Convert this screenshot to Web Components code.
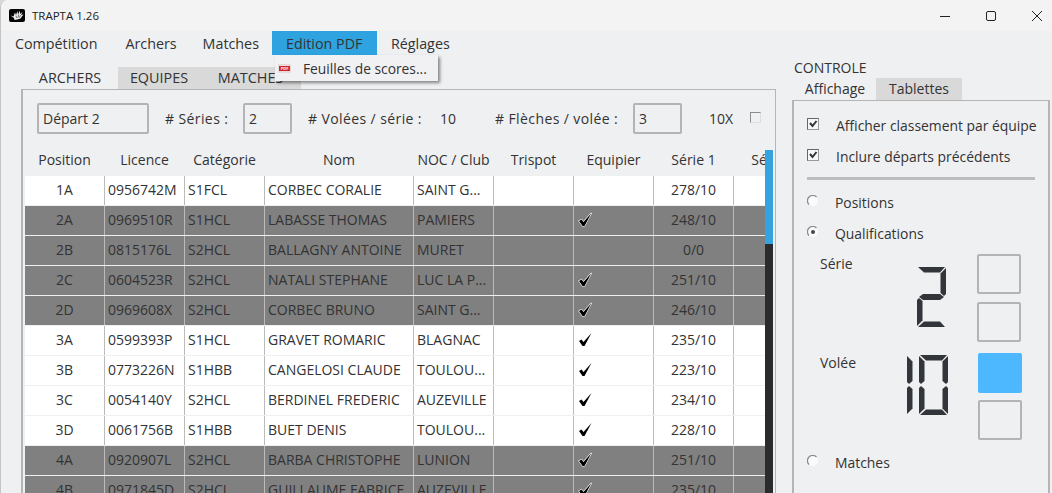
<!DOCTYPE html>
<html lang="fr">
<head>
<meta charset="utf-8">
<title>TRAPTA 1.26</title>
<style>
html, body { margin: 0; height: 100%; overflow: hidden; background: #d9d9d9; }
body { font-family: "Open Sans", "Noto Sans", "Liberation Sans", sans-serif; font-size: 14px; color: #333; }
</style>
</head>
<body>
<trapta-window>
  <title-bar slot="title">TRAPTA 1.26</title-bar>
  <menu-bar slot="menu"></menu-bar>
  <left-pane slot="left"></left-pane>
  <control-pane slot="right"></control-pane>
</trapta-window>

<script>
'use strict'

class TrapaWindow extends HTMLElement {
    constructor() {
        super()
        this.attachShadow({mode: 'open'}).innerHTML = `
<style>
    :host { display: flex; flex-direction: column; height: 493px; background: #eff0f2;
            border-top-left-radius: 8px; border-left: 1px solid #c4c4c4; box-sizing: border-box; overflow: hidden; position: relative; }
    .main { display: flex; flex: 1; min-height: 0; padding: 12px 2px 0 20px; gap: 16px; }
</style>
<slot name="title"></slot>
<slot name="menu"></slot>
<div class="main"><slot name="left"></slot><slot name="right"></slot></div>`
    }
}
customElements.define('trapta-window', TrapaWindow)

class TitleBar extends HTMLElement {
    constructor() {
        super()
        this.attachShadow({mode: 'open'}).innerHTML = `
<style>
    :host { display: flex; align-items: center; height: 31px; background: #f3f3f3; padding-left: 8px; font-size: 11.500px; color: #222; }
    .logo { width: 16px; height: 13px; margin-right: 7px; margin-top: -1px; }
    .label { flex: 1; margin-top: -1px; }
    .btns { display: flex; align-items: center; gap: 36px; margin-right: 10px; }
    .btns svg { width: 10px; height: 10px; display: block; }
</style>
<svg class="logo" viewBox="0 0 16 13">
  <rect width="16" height="13" rx="2" fill="#050505"/>
  <path d="M1.500 6.500 4.500 7.500 6 3.500 7 6 8.500 2 9 5.500 11 1.500 11 5 13.500 3 12 6 14.500 5.500 12.500 8 11.500 9.500 8 10.500 5.500 11 5 9Z" fill="#f0f0f0"/>
  <path d="M7 6.500 7.500 9M9.500 5.500 9 9M11.500 6 10.500 8.500" stroke="#222" stroke-width=".6"/>
</svg>
<span class="label"><slot></slot></span>
<div class="btns">
  <svg viewBox="0 0 10 10"><path d="M0 5.500H10" stroke="#222" stroke-width="1"/></svg>
  <svg viewBox="0 0 10 10"><rect x=".5" y=".5" width="9" height="9" rx="1.500" fill="none" stroke="#222" stroke-width="1"/></svg>
  <svg viewBox="0 0 10 10"><path d="M0 0 10 10M10 0 0 10" stroke="#222" stroke-width="1"/></svg>
</div>`
    }
}
customElements.define('title-bar', TitleBar)

class MenuBar extends HTMLElement {
    constructor() {
        super()
        this.attachShadow({mode: 'open'}).innerHTML = `
<style>
    :host { display: flex; height: 24px; line-height: 25px; font-size: 14.300px; color: #333; position: relative; z-index: 5; }
    span { padding: 0 14px; }
    .active { background: #2fa3e0; width: 105px; box-sizing: border-box; margin-left: -1px; }
    .popup { position: absolute; left: 274px; top: 24px; width: 163px; height: 26px; background: #f1f1f3;
             box-shadow: 2px 2px 3px rgba(0,0,0,.45); display: flex; align-items: center; gap: 12px; padding: 2px 0 0 3px; box-sizing: border-box; }
    .popup svg { width: 13px; height: 9px; margin-top: -1px; flex: none; }
    .popup b { font-weight: 400; font-size: 13.800px; line-height: 20px; margin-top: -1px; }
</style>
<span>Compétition</span><span style="padding-right:12px">Archers</span><span>Matches</span><span class="active">Edition PDF</span><span>Réglages</span>
<div class="popup">
  <svg viewBox="0 0 13 9"><rect width="13" height="9" rx="1" fill="#e6dada"/><rect x="1" y="2" width="11" height="5" fill="#d8232a"/><text x="6.500" y="6.200" font-size="4" font-weight="700" fill="#fff" text-anchor="middle">PDF</text></svg>
  <b>Feuilles de scores...</b>
</div>`
    }
}
customElements.define('menu-bar', MenuBar)

class TabStrip extends HTMLElement {
    constructor() {
        super()
        const root = this.attachShadow({mode: 'open'})
        const tabs = (this.getAttribute('tabs') || '').split(',')
        const widths = (this.getAttribute('widths') || '').split(',')
        root.innerHTML = `
<style>
    :host { display: flex; height: 22px; line-height: 22px; font-size: var(--tab-size, 14px); }
    span { box-sizing: border-box; text-align: center; flex: none; }
    .first { padding-left: var(--tab-first-pad, 0); }
    .off { background: #d9d9d9; padding-right: var(--tab-off-pad, 0); }
</style>
${tabs.map((t, i) => `<span class="${i ? 'off' : 'first'}" style="width:${widths[i]}px">${t}</span>`).join('')}`
    }
}
customElements.define('tab-strip', TabStrip)

class FieldBox extends HTMLElement {
    constructor() {
        super()
        this.attachShadow({mode: 'open'}).innerHTML = `
<style>
    :host { display: flex; align-items: center; box-sizing: border-box; height: 31px; border: 2px solid #b4b4b4; border-radius: 2px; padding-left: 4px; font-size: 14px; }
</style><slot></slot>`
    }
}
customElements.define('field-box', FieldBox)

class ScoreForm extends HTMLElement {
    constructor() {
        super()
        this.attachShadow({mode: 'open'}).innerHTML = `
<style>
    :host { display: flex; align-items: center; height: 31px; font-size: 14px; padding-left: 14px; }
    field-box { flex: none; }
    span { flex: none; }
    .lbl { letter-spacing: .4px; }
    .tick { width: 11px; height: 11px; border: 1px solid #8c8c8c; border-right-color: #ddd; border-bottom-color: #ddd; box-sizing: border-box; margin-left: 17px; margin-top: -2px; }
</style>
<field-box style="width:112px">Départ 2</field-box>
<span class="lbl" style="margin-left:16px;width:78px"># Séries :</span>
<field-box style="width:49px">2</field-box>
<span class="lbl" style="margin-left:16px;width:132px"># Volées / série :</span>
<span style="width:55px">10</span>
<span class="lbl" style="width:138px"># Flèches / volée :</span>
<field-box style="width:49px">3</field-box>
<span style="margin-left:27px">10X</span>
<div class="tick"></div>`
    }
}
customElements.define('score-form', ScoreForm)

const CHECK = `<svg width="15" height="15" viewBox="0 0 15 15"><path d="M1 9 3.500 7.500 5.500 10 13.500 1 6.500 14 4.500 14Z" fill="#000" stroke="#fff" stroke-width="VAR" paint-order="stroke"/></svg>`

const ROWS = [
    ['1A', '0956742M', 'S1FCL', 'CORBEC CORALIE', 'SAINT G...', 0, 0, '278/10', '28', 0],
    ['2A', '0969510R', 'S1HCL', 'LABASSE THOMAS', 'PAMIERS', 0, 1, '248/10', '25', 1],
    ['2B', '0815176L', 'S2HCL', 'BALLAGNY ANTOINE', 'MURET', 0, 0, '0/0', '0', 1],
    ['2C', '0604523R', 'S2HCL', 'NATALI STEPHANE', 'LUC LA P...', 0, 1, '251/10', '25', 1],
    ['2D', '0969608X', 'S2HCL', 'CORBEC BRUNO', 'SAINT G...', 0, 1, '246/10', '23', 1],
    ['3A', '0599393P', 'S1HCL', 'GRAVET ROMARIC', 'BLAGNAC', 0, 1, '235/10', '24', 0],
    ['3B', '0773226N', 'S1HBB', 'CANGELOSI CLAUDE', 'TOULOU...', 0, 1, '223/10', '20', 0],
    ['3C', '0054140Y', 'S2HCL', 'BERDINEL FREDERIC', 'AUZEVILLE', 0, 1, '234/10', '23', 0],
    ['3D', '0061756B', 'S1HBB', 'BUET DENIS', 'TOULOU...', 0, 1, '228/10', '23', 0],
    ['4A', '0920907L', 'S2HCL', 'BARBA CHRISTOPHE', 'LUNION', 0, 1, '251/10', '25', 1],
    ['4B', '0971845D', 'S2HCL', 'GUILLAUME FABRICE', 'AUZEVILLE', 0, 1, '235/10', '23', 1]
]

class ArcherTable extends HTMLElement {
    constructor() {
        super()
        const heads = ['Position', 'Licence', 'Catégorie', 'Nom', 'NOC / Club', 'Trispot', 'Equipier', 'Série 1', 'Série 2']
        const cell = (r, i) => {
            const v = r[i]
            if (i === 6) return `<div class="c chk">${v ? CHECK.replace('VAR', r[9] ? '1.2' : '0') : ''}</div>`
            if (i === 5) return '<div class="c"></div>'
            const cls = (i === 0 || i === 7 || i === 8) ? 'c ctr' : 'c'
            return `<div class="${cls}">${v}</div>`
        }
        const body = ROWS.map(r => {
            let s = ''
            for (let i = 0; i < 9; i++) s += cell(r, i)
            return `<div class="row ${r[9] ? 'dark' : ''}">${s}</div>`
        }).join('')
        this.attachShadow({mode: 'open'}).innerHTML = `
<style>
    :host { display: flex; flex: 1; min-height: 0; overflow: hidden; margin: 16px 0 0 2px; font-size: 14px; }
    .view { width: 740px; overflow: hidden; flex: none; }
    .row, .head { display: grid; grid-template-columns: 79px 79px 79px 148px 79px 79px 79px 79px 79px; column-gap: 1px; width: 800px; }
    .head { height: 26px; line-height: 20px; }
    .head div { text-align: center; white-space: nowrap; }
    .row { height: 29px; margin-bottom: 1px; background: #bbb; }
    .c { background: #fff; line-height: 27px; padding-left: 3px; white-space: nowrap; overflow: hidden; color: #333; }
    .ctr { text-align: center; padding: 0; }
    .dark .c { background: #808080; color: #333; }
    .chk { padding: 6px 0 0 4px; box-sizing: border-box; }
    .chk svg { display: block; }
    .bar { width: 8px; flex: none; background: #2b2b2b; height: 344px; position: relative; }
    .bar i { position: absolute; left: 0; top: 0; width: 100%; height: 94px; background: #36a3e1; }
</style>
<div class="view"><div class="head">${heads.map(h => `<div>${h}</div>`).join('')}</div>${body}</div>
<div class="bar"><i></i></div>`
    }
}
customElements.define('archer-table', ArcherTable)

class LeftPane extends HTMLElement {
    constructor() {
        super()
        this.attachShadow({mode: 'open'}).innerHTML = `
<style>
    :host { display: flex; flex-direction: column; width: 755px; flex: none; --tab-size: 14.400px; --tab-off-pad: 4px; --tab-first-pad: 1px; }
    .panel { flex: 1; min-height: 0; display: flex; flex-direction: column; border: 2px solid #b5b5b5; border-width: 1px 1px 0 2px; padding-top: 13px; box-sizing: border-box; }
</style>
<tab-strip tabs="ARCHERS,EQUIPES,MATCHES" widths="97,86,97"></tab-strip>
<div class="panel"><score-form></score-form><archer-table></archer-table></div>`
    }
}
customElements.define('left-pane', LeftPane)

class OptRow extends HTMLElement {
    constructor() {
        super()
        const radio = this.hasAttribute('radio')
        const on = this.hasAttribute('on')
        const mark = radio
            ? `<svg width="12" height="12" viewBox="0 0 12 12"><circle cx="6" cy="6" r="5" fill="#fbfbfb"/><path d="M2 9.500A5 5 0 0 1 9.500 2" fill="none" stroke="#8a8a8a" stroke-width="1.200"/>${on ? '<circle cx="6" cy="6" r="2" fill="#444"/>' : ''}</svg>`
            : `<svg width="12" height="12" viewBox="0 0 12 12"><rect x=".5" y=".5" width="11" height="11" fill="#f7f7f7" stroke="#999" stroke-width="1"/><path d="M.5 11.500V.5H11.500" fill="none" stroke="#666" stroke-width="1"/><path d="M3 5 5.500 8 9.500 3" fill="none" stroke="#333" stroke-width="2"/></svg>`
        this.attachShadow({mode: 'open'}).innerHTML = `
<style>
    :host { display: flex; align-items: center; height: 20px; font-size: 13.900px; }
    .m { width: ${radio ? 28 : 29}px; flex: none; display: flex; margin-top: -2px; }
</style>
<div class="m">${mark}</div><slot></slot>`
    }
}
customElements.define('opt-row', OptRow)

const SEGS = {
    a: '1,0 28,0 23,5.500 7,5.500',
    b: '29,1 29,27 27,29 23.500,26 23.500,6.500',
    c: '29,59 29,33 27,31 23.500,34 23.500,53.500',
    d: '1,60 28,60 23,54.500 7,54.500',
    e: '0,59 0,33 2,31 5.500,34 5.500,53.500',
    f: '0,1 0,27 2,29 5.500,26 5.500,6.500',
    g: '2,30 6,27 23,27 27,30 23,33 6,33'
}
const DIGITS = {'0': 'abcdef', '1': 'bc', '2': 'abged'}

class LcdNumber extends HTMLElement {
    constructor() {
        super()
        const val = this.getAttribute('value') || '0'
        const digit = d => {
            if (d === '1') return `<svg class="one" viewBox="22.500 0 6.500 60"><polygon points="${SEGS.b}"/><polygon points="${SEGS.c}"/></svg>`
            return `<svg viewBox="0 0 29 60">${DIGITS[d].split('').map(s => `<polygon points="${SEGS[s]}"/>`).join('')}</svg>`
        }
        this.attachShadow({mode: 'open'}).innerHTML = `
<style>
    :host { display: flex; justify-content: flex-end; gap: 6px; height: 60px; }
    svg { width: 29px; height: 60px; fill: #32363a; display: block; }
    svg.one { width: 6.500px; transform: scaleX(-1); }
</style>
${val.split('').map(digit).join('')}`
    }
}
customElements.define('lcd-number', LcdNumber)

class ControlPane extends HTMLElement {
    constructor() {
        super()
        this.attachShadow({mode: 'open'}).innerHTML = `
<style>
    :host { display: flex; flex-direction: column; width: 258px; flex: none; font-size: 14px; margin-top: -11px; }
    .cap { height: 22px; line-height: 24px; padding-left: 2px; }
    tab-strip { margin-left: 2px; }
    .panel { flex: 1; border: 1px solid #b5b5b5; border-width: 1px 2px 0 2px; padding: 14px 0 0 13px; box-sizing: border-box; display: flex; flex-direction: column; }
    opt-row + opt-row { margin-top: 11px; }
    .sep { height: 3px; background: #bcbcbc; width: 228px; margin: 11px 0 12px; }
    .lcd { display: grid; grid-template-columns: 60px 79px auto; margin-top: 11px; }
    .lcd span { padding-left: 13px; line-height: 20px; }
    .stack { display: flex; flex-direction: column; margin-left: 31px; width: 44px; }
    .s1 { gap: 8px; }
    .s2 { gap: 7px; margin-left: 32px; }
    .box { height: 40px; width: 44px; border: 2px solid #b4b4b4; border-radius: 2px; box-sizing: border-box; }
    .on { background: #4db8ff; border: none; }
    .r2 { margin-top: 11px; }
    lcd-number { margin-top: 13px; }
    lcd-number.n2 { margin-right: -2px; }
</style>
<div class="cap">CONTROLE</div>
<tab-strip tabs="Affichage,Tablettes" widths="82,86"></tab-strip>
<div class="panel">
  <opt-row on>Afficher classement par équipe</opt-row>
  <opt-row on>Inclure départs précédents</opt-row>
  <div class="sep"></div>
  <opt-row radio>Positions</opt-row>
  <opt-row radio on>Qualifications</opt-row>
  <div class="lcd">
    <span>Série</span><lcd-number value="2"></lcd-number><div class="stack s1"><div class="box"></div><div class="box"></div></div>
    <span class="r2">Volée</span><lcd-number class="n2" value="10"></lcd-number><div class="stack s2 r2"><div class="box on"></div><div class="box"></div></div>
  </div>
  <opt-row radio style="margin-top:12px">Matches</opt-row>
</div>`
    }
}
customElements.define('control-pane', ControlPane)
</script>
</body>
</html>
